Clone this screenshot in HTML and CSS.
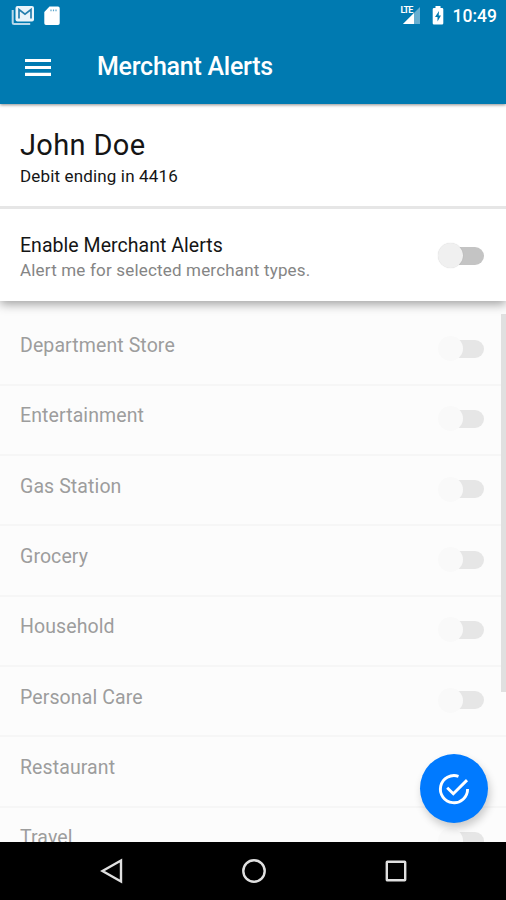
FILE: index.html
```html
<!DOCTYPE html>
<html lang="en">
<head>
<meta charset="utf-8">
<title>Merchant Alerts</title>
<link rel="stylesheet" href="styles.css">
</head>
<body>
<div class="phone">
  <header class="header">
    <div class="status">
      <svg class="mail" width="24" height="20" viewBox="0 0 24 20"><path d="M6.500 0h14.500a2 2 0 0 1 2 2v11.500a2 2 0 0 1-2 2H6.500a2 2 0 0 1-2-2V2a2 2 0 0 1 2-2z" fill="#eaf4fa"/><path d="M1.700 4v12.500a1.500 1.500 0 0 0 1.500 1.500h16" fill="none" stroke="#b8d8ea" stroke-width="2"/><path d="M8 12.500V3.500l6 4.700 6-4.700v9" fill="none" stroke="#267fae" stroke-width="1.700"/></svg>
      <svg class="sd" width="16" height="20" viewBox="0 0 16 20"><path d="M5.500.5H14a1.700 1.700 0 0 1 1.700 1.700v15.100A1.700 1.700 0 0 1 14 19H2a1.700 1.700 0 0 1-1.700-1.700V6z" fill="#fff"/><path d="M7 3.500v1.700M9.500 3.500v1.700M12 3.500v1.700" stroke="#5ba5cb" stroke-width="1.200"/></svg>
      <span class="grow"></span>
      <span class="signal">
        <svg width="22" height="19" viewBox="0 0 22 19"><path d="M21 1v17H4z" fill="#67aed0"/><path d="M15 7v11H4z" fill="#fff"/></svg>
        <span class="lte">LTE</span>
      </span>
      <svg class="battery" width="12" height="19" viewBox="0 0 12 19"><path d="M3.500 0h5v2H10a1.300 1.300 0 0 1 1.300 1.300v13.900a1.300 1.300 0 0 1-1.300 1.300H2A1.300 1.300 0 0 1 .7 17.200V3.300A1.300 1.300 0 0 1 2 2h1.500z" fill="#fff"/><path d="M7 5l-4 6h2.500v4.500L9 9.500H6.700z" fill="#007ab1"/></svg>
      <span class="clock">10:49</span>
    </div>
    <div class="toolbar">
      <svg class="menu" width="26" height="19" viewBox="0 0 26 19"><path d="M0 3.500h26M0 10.500h26M0 17.300h26" stroke="#fff" stroke-width="3.200"/></svg>
      <h1 class="title">Merchant Alerts</h1>
    </div>
  </header>
  <section class="profile">
    <div class="name">John Doe</div>
    <div class="account">Debit ending in 4416</div>
  </section>
  <section class="enable">
    <div>
      <div class="enable-title">Enable Merchant Alerts</div>
      <div class="enable-note">Alert me for selected merchant types.</div>
    </div>
    <span class="toggle"></span>
  </section>
  <main class="list">
    <div class="row"><span class="label">Department Store</span><span class="toggle off"></span></div>
    <div class="row"><span class="label">Entertainment</span><span class="toggle off"></span></div>
    <div class="row"><span class="label">Gas Station</span><span class="toggle off"></span></div>
    <div class="row"><span class="label">Grocery</span><span class="toggle off"></span></div>
    <div class="row"><span class="label">Household</span><span class="toggle off"></span></div>
    <div class="row"><span class="label">Personal Care</span><span class="toggle off"></span></div>
    <div class="row"><span class="label">Restaurant</span></div>
    <div class="row"><span class="label">Travel</span><span class="toggle off"></span></div>
    <span class="scrollbar"></span>
    <span class="fab"><svg width="34" height="34" viewBox="0 0 34 34" fill="none" stroke="#fff" stroke-width="2.900"><path d="M21.500 4.300A13.600 13.600 0 1 0 30.600 17"/><path d="M10.200 15.700l6.100 6.100L30 8.100"/></svg></span>
  </main>
  <nav class="navbar">
    <svg width="24" height="26" viewBox="0 0 24 26"><path d="M21 2.500v21L2.500 13z"/></svg>
    <svg width="26" height="26" viewBox="0 0 26 26"><circle cx="13" cy="13" r="10.700"/></svg>
    <svg width="24" height="26" viewBox="0 0 24 26"><rect x="2.800" y="3.800" width="18.400" height="18.400" rx=".5"/></svg>
  </nav>
</div>
</body>
</html>
```
FILE: styles.css
```css
* { box-sizing: border-box; }
body { margin: 0; font-family: Roboto, "Liberation Sans", sans-serif; background: #fcfcfc; }
.phone { width: 506px; height: 900px; display: flex; flex-direction: column; overflow: hidden; }
.header { position: relative; z-index: 2; height: 104px; flex: none; background: #007ab1; color: #fff; box-shadow: 0 1px 3px rgba(0,0,0,.45); }
.status { height: 32px; display: flex; align-items: flex-start; padding: 6px 9px 0 11px; }
.sd { margin-left: 9px; }
.grow { flex: 1; }
.signal { position: relative; width: 22px; height: 19px; }
.signal svg { display: block; }
.lte { position: absolute; left: 2px; top: 0; font-size: 9px; line-height: 8px; font-weight: 700; letter-spacing: -.9px; background: #007ab1; padding-right: 1px; }
.battery { margin-left: 11px; }
.clock { margin-left: 9px; font-size: 17.500px; line-height: 21px; font-weight: 500; }
.toolbar { height: 72px; display: flex; align-items: center; padding: 0 25px 3px; }
.title { margin: 0 0 0 46px; font-size: 25px; line-height: 30px; font-weight: 500; letter-spacing: -.25px; }
.profile { height: 105px; flex: none; padding: 24px 20px 0; background: #fff; border-bottom: 3px solid #e6e6e6; color: #151515; }
.name { font-size: 29px; line-height: 35px; letter-spacing: .35px; }
.account { font-size: 17px; line-height: 22px; margin-top: 2px; letter-spacing: .15px; }
.enable { position: relative; z-index: 1; height: 92px; flex: none; display: flex; justify-content: space-between; align-items: center; padding: 1px 22px 0 20px; background: #fff; box-shadow: 0 3px 10px rgba(0,0,0,.38); clip-path: inset(0 0 -20px 0); }
.enable-title { font-size: 19.500px; line-height: 25px; padding-top: 3px; letter-spacing: .04px; color: #151515; }
.enable-note { font-size: 17px; line-height: 24px; letter-spacing: .18px; color: #858585; }
.toggle { position: relative; width: 38px; height: 18px; border-radius: 9px; background: #c4c4c4; }
.toggle::before { content: ""; position: absolute; left: -8px; top: -3.500px; width: 25px; height: 25px; border-radius: 50%; background: #f0f0f0; box-shadow: 0 0 1px rgba(0,0,0,.2); }
.toggle.off { margin-bottom: 2px; background: #e6e6e6; }
.toggle.off::before { background: #f9f9f9; box-shadow: none; }
.list { position: relative; height: 541px; flex: none; overflow: hidden; padding-top: 14.500px; background: #fcfcfc; }
.row { height: 70.300px; display: flex; align-items: center; justify-content: space-between; padding: 0 22px 0 20px; border-bottom: 2px solid #f6f6f6; }
.label { font-size: 19.500px; line-height: 26px; letter-spacing: .1px; color: #9d9d9d; padding-bottom: 7px; }
.scrollbar { position: absolute; right: 0; top: 13px; width: 5px; height: 378px; background: #e0e0e0; }
.fab { position: absolute; left: 420px; top: 453px; width: 68px; height: 69px; border-radius: 50%; background: #007aff; display: flex; align-items: center; justify-content: center; box-shadow: 2px 5px 9px rgba(0,0,0,.2); }
.navbar { height: 58px; flex: none; background: #000; display: flex; justify-content: space-between; align-items: center; padding: 0 98px 0 100px; }
.navbar svg { fill: none; stroke: #e0e0e0; stroke-width: 2.400; }
```
